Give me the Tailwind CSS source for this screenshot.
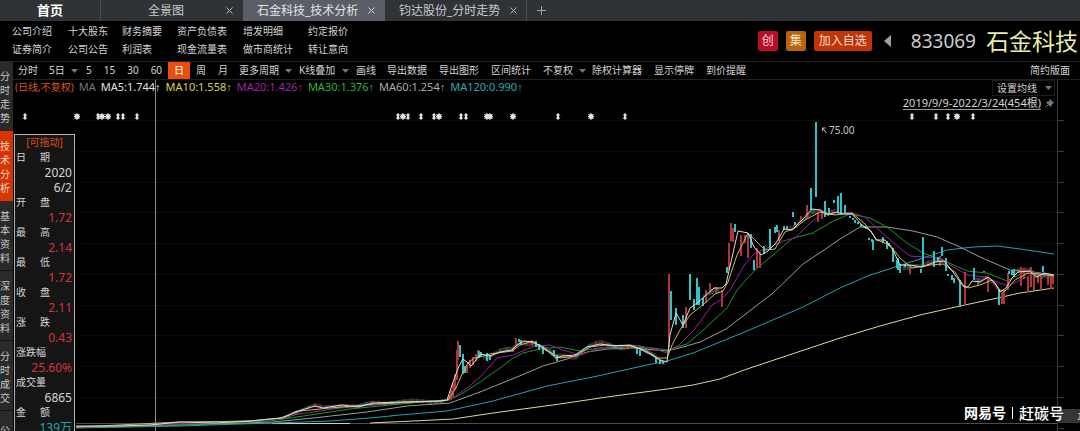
<!DOCTYPE html>
<html lang="zh-CN">
<head>
    <meta charset="UTF-8">
    <meta name="viewport" content="width=device-width, initial-scale=1.0">
    <title>石金科技_技术分析</title>
    <script src="https://cdn.jsdelivr.net/npm/@tailwindcss/browser@4"></script>
</head>
<body class="bg-black text-[#d4d4d4] h-screen flex flex-col overflow-hidden font-['Noto_Sans','Liberation_Sans','Noto_Sans_CJK_SC',sans-serif] text-[10px]">

    <!-- Abas -->
    <nav class="flex shrink-0 h-[21px] bg-[#303336] text-[12px] leading-5 text-[#c8cacc]">
        <a href="#" class="w-[100px] text-center text-[13px] font-bold text-white">首页</a>
        <div class="w-[143px] flex items-center border-l border-[#4a4d50]">
            <a href="#" class="flex-1 pl-4 text-center">全景图</a>
            <button class="w-7 h-full flex items-center justify-center" aria-label="关闭"><svg class="size-[7px]" viewBox="0 0 7 7" stroke="#b5b7b9"><path d="M.5 .5l6 6M6.500 .5l-6 6"/></svg></button>
        </div>
        <div class="w-[142px] flex items-center bg-[#5b5e66] text-[#e4e5e6]">
            <a href="#" class="flex-1 pl-3.5 whitespace-nowrap">石金科技_技术分析</a>
            <button class="w-7 h-full flex items-center justify-center" aria-label="关闭"><svg class="size-[7px]" viewBox="0 0 7 7" stroke="#d0d2d4"><path d="M.5 .5l6 6M6.500 .5l-6 6"/></svg></button>
        </div>
        <div class="w-[142px] flex items-center border-r border-[#4a4d50]">
            <a href="#" class="flex-1 pl-3.5 whitespace-nowrap">钧达股份_分时走势</a>
            <button class="w-7 h-full flex items-center justify-center" aria-label="关闭"><svg class="size-[7px]" viewBox="0 0 7 7" stroke="#b5b7b9"><path d="M.5 .5l6 6M6.500 .5l-6 6"/></svg></button>
        </div>
        <button class="w-7 flex items-center justify-center" aria-label="新标签"><svg class="size-[9px]" viewBox="0 0 9 9" stroke="#a5a7a9"><path d="M4.500 0v9M0 4.500h9"/></svg></button>
    </nav>

    <!-- Cabeçalho -->
    <header class="flex shrink-0 h-10 items-center justify-between pl-3">
        <div class="grid grid-cols-[56px_54px_55px_66px_65px_auto] pb-0.5 leading-[18px] whitespace-nowrap">
            <a href="#">公司介绍</a><a href="#">十大股东</a><a href="#">财务摘要</a><a href="#">资产负债表</a><a href="#">增发明细</a><a href="#">约定报价</a>
            <a href="#">证券简介</a><a href="#">公司公告</a><a href="#">利润表</a><a href="#">现金流量表</a><a href="#">做市商统计</a><a href="#">转让意向</a>
        </div>
        <div class="flex items-center whitespace-nowrap">
            <span class="size-5 rounded-xs bg-[#b80d27] text-[12px] leading-5 text-center text-[#f3d5d8]">创</span>
            <span class="ml-2 size-5 rounded-xs bg-[#b9650f] text-[12px] leading-5 text-center text-[#f8e6cf]">集</span>
            <button class="ml-2 h-5 px-[5px] rounded-xs bg-[#c03406] text-[12px] leading-5 text-[#f6ddd2]">加入自选</button>
            <button class="ml-3 mr-5" aria-label="上一只"><svg class="w-[7px] h-3" viewBox="0 0 7 12" fill="#a0a0a0"><path d="M7 0v12L0 6z"/></svg></button>
            <span class="text-[19px] leading-7 text-[#c9ccd0]">833069</span>
            <h1 class="ml-2.5 mr-0.5 text-[23px] leading-7 text-[#e9ecaa]">石金科技</h1>
        </div>
    </header>

    <main class="flex flex-1 min-h-0">
        <!-- Menu lateral -->
        <aside class="w-[13px] shrink-0 bg-[#2a2a2a] leading-[14px] overflow-hidden text-[#c8c8c8]">
            <a href="#" class="block h-[70px] py-2 pr-[2px] break-all">分时走势</a>
            <a href="#" class="block h-[70px] py-2 pr-[2px] break-all bg-[#d63400] text-[#f6d8cb]">技术分析</a>
            <a href="#" class="block h-[70px] py-2 pr-[2px] break-all border-b border-[#151515]">基本资料</a>
            <a href="#" class="block h-[70px] py-2 pr-[2px] break-all border-b border-[#151515]">深度资料</a>
            <a href="#" class="block h-[70px] py-2 pr-[2px] break-all border-b border-[#151515]">分时成交</a>
            <a href="#" class="block h-[70px] py-3 pr-[2px] break-all">公司资讯</a>
        </aside>

        <div class="flex flex-1 flex-col min-w-0">
            <!-- Barra de períodos -->
            <div class="flex shrink-0 items-stretch h-[19px] border-y border-[#202020] whitespace-nowrap leading-[17px]">
                <button class="px-[5px]">分时</button>
                <label class="flex items-center gap-1.5 pl-1.5 pr-0.5"><select class="appearance-none" aria-label="多日"><option>5日</option></select><svg class="w-[7px] h-1" viewBox="0 0 7 4" fill="#777"><path d="M0 0h7L3.500 4z"/></svg></label>
                <button class="px-1.5">5</button>
                <button class="px-1.5">15</button>
                <button class="px-1.5">30</button>
                <button class="px-1.5">60</button>
                <button class="px-1.5 bg-[#ea4f0c] text-white">日</button>
                <button class="px-1.5">周</button>
                <button class="px-1.5">月</button>
                <label class="flex items-center gap-1.5 pl-[5px] pr-0.5"><select class="appearance-none" aria-label="周期"><option>更多周期</option></select><svg class="w-[7px] h-1" viewBox="0 0 7 4" fill="#777"><path d="M0 0h7L3.500 4z"/></svg></label>
                <label class="flex items-center gap-1.5 pl-[5px] pr-0.5"><select class="appearance-none" aria-label="叠加"><option>K线叠加</option></select><svg class="w-[7px] h-1" viewBox="0 0 7 4" fill="#777"><path d="M0 0h7L3.500 4z"/></svg></label>
                <button class="px-[5px]">画线</button>
                <button class="px-1.5">导出数据</button>
                <button class="px-1.5">导出图形</button>
                <button class="px-1.5">区间统计</button>
                <label class="flex items-center gap-1.5 px-1.5"><select class="appearance-none" aria-label="复权"><option>不复权</option></select><svg class="w-[7px] h-1" viewBox="0 0 7 4" fill="#777"><path d="M0 0h7L3.500 4z"/></svg></label>
                <button class="pr-1.5">除权计算器</button>
                <button class="px-1.5">显示停牌</button>
                <button class="px-1.5">到价提醒</button>
                <button class="ml-auto mr-1 px-1.5">简约版面</button>
            </div>

            <section class="relative flex-1 min-h-0">
                <!-- Gráfico de candles -->
                <svg id="chart" class="absolute inset-0 size-full" viewBox="13 80 1067 351" preserveAspectRatio="none" fill="none">
                    <path stroke="#141414" stroke-dasharray="1 1" d="M76 120.500H1057M76 151.500H1057M76 182.500H1057M76 212.500H1057M76 243.500H1057M76 274.500H1057M76 305.500H1057M76 335.500H1057M76 366.500H1057M76 397.500H1057"/>
                    <path stroke="#3a3a3a" d="M1057.500 80V431M1057 120.500h7M1057 151.500h7M1057 182.500h7M1057 212.500h7M1057 243.500h7M1057 274.500h7M1057 305.500h7M1057 335.500h7M1057 366.500h7M1057 397.500h7M1057 428.500h7"/>
                    <path stroke="#4c4c4c" d="M76 423.500H1057"/>
                    <path stroke="#8c8c8c" d="M155.500 80V431"/>
                    <path stroke="#b9d4cf" d="M272 423.500h78"/>

                    <polyline stroke="#d8d89c" points="370,423 413,421 453,419 493,413 553,405 607,397 667,389 693,385 720,379 747,369 780,358 807,349 840,338 870,329 880,326 920,315 960,306 993,299 1020,293 1054,288"/>
                    <polyline stroke="#24a0b0" points="76,428 180,426 240,424 275,423 330,421 370,418 400,415 447,411 493,401 547,386 593,377 647,365 667,361 693,353 720,342 747,331 803,307 840,288 870,275 880,272 923,258 947,250 973,247 997,246 1020,249 1054,254"/>
                    <polyline stroke="#9a9a9a" points="76,427 180,425 240,423 273,422 313,418 367,412 407,406 450,403 480,392 517,377 543,366 567,359 587,352 607,349 633,348 667,351 683,347 700,342 726,329 747,313 773,293 803,264 827,248 840,239 860,227 887,227 913,231 937,237 960,247 980,257 1010,270 1027,271 1054,275"/>
                    <polyline stroke="#149a22" points="76,427 200,424 270,421 310,415 350,409 400,404 450,400 463,393 483,380 500,368 513,358 523,353 540,349 560,347 580,351 600,348 627,347 653,348 667,350 687,344 700,333 727,308 737,290 755,270 773,255 793,238 813,233 833,221 850,214 870,218 887,227 907,243 923,253 947,262 967,271 987,273 1007,281 1023,273 1054,276"/>
                    <polyline stroke="#9c1ba0" points="76,427 200,423 270,420 300,414 340,408 400,403 450,400 467,388 480,377 490,366 497,358 513,355 525,350 535,346 550,345 563,350 580,355 600,348 620,345 640,346 655,349 667,353 680,344 693,331 700,322 712,305 722,299 730,290 745,264 755,253 775,245 783,241 795,238 808,225 822,214 835,214 850,212 865,217 880,231 895,244 910,256 925,257 940,258 955,268 968,275 985,277 1000,283 1008,286 1020,280 1035,273 1054,275"/>
                    <g id="candles"></g>
                    <polyline stroke="#c6bd4c" points="76,427 180,422 250,421 280,418 300,411 330,408 375,404 440,401 448,400 456,388 462,374 468,363 474,358 480,357 490,354 512,351 520,345 530,342 540,345 550,352 560,358 575,356 590,347 605,345 630,346 645,350 658,358 667,358 672,345 680,330 690,315 705,303 715,294 723,291 728,282 737,255 748,233 755,240 765,250 775,249 785,232 795,228 805,220 820,212 835,215 852,213 865,224 877,240 890,245 900,258 912,268 930,265 943,264 955,272 963,285 968,288 980,285 992,280 1000,290 1005,291 1015,280 1028,273 1040,274 1054,276"/>
                    <polyline id="ma5" stroke="#dcdcdc" points="76,426 120,426 150,425 180,422 215,423 250,421 270,419 283,418 295,412 315,406 323,408 342,405 358,407 373,403 400,402 440,401 447,400 453,382 459,366 463,359 467,362 471,366 476,360 481,354 490,356 500,352 512,350 517,345 524,341 534,342 541,347 549,352 556,358 562,356 575,355 587,347 600,344 615,346 630,345 640,349 650,354 660,360 667,362 670,335 676,313 683,325 690,308 697,303 705,296 714,288 722,288 726,284 731,262 738,231 748,233 754,247 761,255 768,251 776,243 784,229 792,230 803,219 812,209 820,210 828,215 836,212 843,214 852,214 862,225 871,231 876,240 885,240 893,250 900,265 910,265 922,267 935,262 944,261 953,272 960,282 964,287 968,287 972,281 980,282 988,277 995,283 1000,292 1006,288 1012,278 1018,272 1030,271 1037,277 1044,273 1054,275"/>
                    <g id="events" fill="#e2e2e2"></g>
                    <path stroke="#c0c0c0" d="M822.500 131V128H825.500M822.500 128l4 5"/>
                    <text x="829" y="134" class="text-[10px]" fill="#c8c8c8">75.00</text>
                    <path fill="#333638" d="M1058 409h22v14h-22z"/>
                    <path stroke="#b9b9b9" d="M1078 413.500h2M1080 414v3l-2 2.500h2"/>
                </svg>

                <!-- Médias móveis -->
                <div class="relative flex items-start gap-[5px] h-4 pl-0.5 text-[11px] leading-[14px] whitespace-nowrap">
                    <span class="text-[10px] text-[#dd5518]">(日线,不复权)</span>
                    <span class="text-[#777]">MA</span>
                    <span class="text-[#e2e2e2]">MA5:1.744↑</span>
                    <span class="text-[#d5d53a]">MA10:1.558↑</span>
                    <span class="text-[#a321a8]">MA20:1.426↑</span>
                    <span class="text-[#27b835]">MA30:1.376↑</span>
                    <span class="text-[#adadad]">MA60:1.254↑</span>
                    <span class="text-[#25adb5]">MA120:0.990↑</span>
                    <label class="ml-auto mr-[25px] flex items-center gap-2 h-4 pl-1 pr-0.5 border border-[#1c1c1c] text-[10px]"><select class="appearance-none" aria-label="均线"><option>设置均线</option></select><svg class="w-[7px] h-1" viewBox="0 0 7 4" fill="#777"><path d="M0 0h7L3.500 4z"/></svg></label>
                </div>
                <div class="relative flex justify-end items-center gap-1 pr-[26px] text-[11px] leading-4">
                    <a href="#" class="border-b border-[#999] leading-[13px]">2019/9/9-2022/3/24(454根)</a>
                    <svg class="size-[9px]" viewBox="0 0 9 9" fill="#777" stroke="#777"><path d="M5 .5l3.500 3.500-1 .3L6 6l-.3 1.700L1.500 3.300 3.300 3 5 1.500zM3.300 5.500L.5 8.500"/></svg>
                </div>

                <!-- Painel flutuante de cotação -->
                <dl class="absolute left-px top-[54px] w-[61px] h-[320px] px-px bg-[#151515] border border-[#b4b4b4] leading-[15px]">
                    <dt class="text-center text-[#d94c16]">[可拖动]</dt>
                    <dt class="flex w-[34px] justify-between"><span>日</span><span>期</span></dt>
                    <dd class="text-right text-[12px] leading-[15px] pr-px">2020</dd>
                    <dd class="text-right text-[12px] leading-[15px] pr-px">6/2</dd>
                    <dt class="flex w-[34px] justify-between"><span>开</span><span>盘</span></dt>
                    <dd class="text-right text-[12px] leading-[15px] pr-px text-[#d8313f]">1.72</dd>
                    <dt class="flex w-[34px] justify-between"><span>最</span><span>高</span></dt>
                    <dd class="text-right text-[12px] leading-[15px] pr-px text-[#d8313f]">2.14</dd>
                    <dt class="flex w-[34px] justify-between"><span>最</span><span>低</span></dt>
                    <dd class="text-right text-[12px] leading-[15px] pr-px text-[#d8313f]">1.72</dd>
                    <dt class="flex w-[34px] justify-between"><span>收</span><span>盘</span></dt>
                    <dd class="text-right text-[12px] leading-[15px] pr-px text-[#d8313f]">2.11</dd>
                    <dt class="flex w-[34px] justify-between"><span>涨</span><span>跌</span></dt>
                    <dd class="text-right text-[12px] leading-[15px] pr-px text-[#d8313f]">0.43</dd>
                    <dt>涨跌幅</dt>
                    <dd class="text-right text-[12px] leading-[15px] pr-px text-[#d8313f]">25.60%</dd>
                    <dt>成交量</dt>
                    <dd class="text-right text-[12px] leading-[15px] pr-px">6865</dd>
                    <dt class="flex w-[34px] justify-between"><span>金</span><span>额</span></dt>
                    <dd class="text-right text-[12px] leading-[15px] pr-px text-[#20a5ad]">139万</dd>
                </dl>

                <!-- Marca d'água -->
                <div class="absolute right-4 bottom-2 flex items-center gap-1.5 text-white leading-5 whitespace-nowrap">
                    <span class="text-[14px] font-bold">网易号</span>
                    <span class="w-px h-3 bg-white"></span>
                    <span class="text-[15px] font-medium">赶碳号</span>
                </div>
            </section>
        </div>
    </main>

    <script>
        // [x, topo, base]
        const down = [[460,345,357],[463,354,374],[465,366,373],[479,351,358],[481,352,357],[487,353,361],[490,355,360],[519,339,342],[521,340,344],[536,341,347],[539,344,350],[543,346,354],[554,350,356],[557,355,361],[637,348,354],[640,350,356],[656,358,363],[660,360,364],[663,361,364],[671,291,320],[676,308,325],[683,315,328],[690,274,300],[694,299,310],[697,278,305],[699,287,305],[703,298,306],[727,267,273],[735,224,232],[751,234,248],[754,260,270],[764,246,254],[770,229,250],[775,227,233],[777,225,232],[784,226,230],[787,226,229],[793,212,217],[795,222,225],[811,188,210],[816,122,197],[825,201,217],[829,208,214],[834,200,203],[838,196,213],[841,193,214],[845,205,213],[850,216,218],[853,218,220],[855,220,223],[858,222,224],[861,224,227],[864,226,228],[866,226,229],[869,238,240],[872,239,242],[873,240,250],[883,237,243],[887,241,249],[889,243,246],[893,248,262],[897,260,268],[898,258,270],[900,264,273],[905,264,267],[921,269,273],[923,237,267],[934,251,267],[938,257,261],[942,247,256],[946,258,271],[948,274,276],[952,275,280],[954,278,283],[960,280,307],[974,268,280],[984,271,272],[999,289,305],[1009,271,274],[1012,270,275],[1014,269,277],[1043,266,272]];
        const up = [[449,395,400],[451,390,399],[453,383,397],[455,374,390],[457,350,380],[458,341,360],[467,365,373],[470,360,368],[473,357,365],[476,354,361],[478,350,358],[513,347,352],[516,338,348],[532,340,345],[669,274,347],[686,307,328],[706,290,303],[710,283,292],[716,287,292],[722,290,307],[729,243,270],[731,223,241],[733,228,242],[741,235,256],[745,235,243],[748,235,258],[757,248,268],[760,252,268],[779,230,241],[801,216,222],[807,205,218],[818,212,222],[822,212,219],[910,265,274],[940,256,266],[965,272,305],[978,281,285],[988,278,292],[1002,292,304],[1004,290,304],[1008,273,290],[1021,267,286],[1024,269,279],[1028,277,292],[1031,267,287],[1034,275,290],[1038,275,283],[1041,275,290],[1048,274,285],[1051,275,289],[1053,275,284]];

        let downPath = '', upPath = '';
        down.forEach(([x, a, b]) => { downPath += `M${x} ${a}V${b}`; });
        up.forEach(([x, a, b]) => { upPath += `M${x} ${a}V${b}`; });

        // candles pequenos dos trechos calmos, em torno da MA5
        const ma5 = document.getElementById('ma5').getAttribute('points').split(' ').map(p => p.split(',').map(Number));
        const priceAt = x => {
            const i = ma5.findIndex(p => p[0] >= x);
            if (i < 1) return ma5[0][1];
            const [x0, y0] = ma5[i - 1], [x1, y1] = ma5[i];
            return y0 + (y1 - y0) * (x - x0) / (x1 - x0);
        };
        let smallUp = '', smallDown = '';
        [[285, 446], [484, 666], [704, 720], [790, 835], [904, 946], [976, 998], [1016, 1054]].forEach(([from, to], k) => {
            for (let x = from; x < to; x += 2) {
                const n = Math.sin(x * 12.7) * (k === 0 ? 1 : 2);
                const y = priceAt(x) + n;
                const seg = `M${x} ${(y - 2).toFixed(1)}v${(3 + Math.abs(n)).toFixed(1)}`;
                if (Math.sin(x * 5.3) > 0) smallUp += seg; else smallDown += seg;
            }
        });
        document.getElementById('candles').innerHTML =
            `<path stroke="#b53238" d="${smallUp}"/><path stroke="#2ba8ab" d="${smallDown}"/>` +
            `<path stroke="#b23439" stroke-width="2" d="${upPath}"/><path stroke="#2cc4c8" stroke-width="2" d="${downPath}"/>`;

        // marcadores de eventos
        const arrows = [25, 98, 118, 123, 137, 398, 408, 421, 434, 461, 466, 558, 625, 912, 936, 948, 973];
        const stars = [77, 102, 108, 403, 439, 487, 490, 513, 591, 957];
        let marks = '';
        arrows.forEach(x => { marks += `<path d="M${x} 113l2.500 2.500h-1.500v2h1.500L${x} 120l-2.500-2.500h1.500v-2h-1.500z"/>`; });
        stars.forEach(x => { marks += `<circle cx="${x}" cy="116.500" r="2.500"/><path stroke="#e2e2e2" d="M${x} 113v7M${x - 3} 116.500h6M${x - 2.5} 114l5 5M${x + 2.5} 114l-5 5"/>`; });
        document.getElementById('events').innerHTML = marks;
    </script>
</body>
</html>
